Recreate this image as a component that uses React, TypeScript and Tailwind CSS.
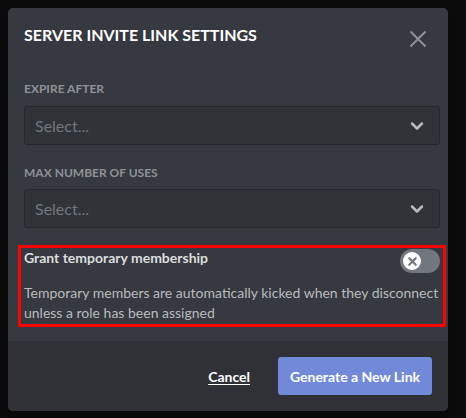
import { FiChevronDown, FiX } from 'react-icons/fi'

const font = { fontFamily: "Lato, 'Noto Sans', sans-serif" }

function SelectBox() {
    return (
        <div className="flex h-[39px] items-center justify-between rounded-[3px] border border-[#25272b] bg-[#303338] pl-[10px] pr-[12px]">
            <span className="text-[16px] text-[#72767d]">Select...</span>
            <FiChevronDown size={20} strokeWidth={3} className="text-[#b9bbbe]" />
        </div>
    )
}

export default function App() {
    return (
        <div className="relative h-[418px] w-[466px] overflow-hidden bg-[#0b0b0c]" style={font}>
            <div className="absolute left-[8px] top-[8px] w-[440px] overflow-hidden rounded-[5px] bg-[#36393f] shadow-lg">
                {/* ── Header ─────────────────────────────── */}
                <div className="flex items-start justify-between pl-[16px] pr-[21px] pt-[16px]">
                    <h2 className="text-[16px] font-bold leading-[22px] text-white">SERVER INVITE LINK SETTINGS</h2>
                    <svg width="18" height="18" viewBox="0 0 18 18" className="mt-[6px]">
                        <path d="M1.5 1.5L16.5 16.5M16.5 1.5L1.5 16.5" stroke="#8e9297" strokeWidth="2" />
                    </svg>
                </div>

                {/* ── Body ───────────────────────────────── */}
                <div className="pb-[14px] pl-[16px] pr-[8px] pt-[33px]">
                    <p className="mb-[9px] text-[12px] font-bold leading-[16px] text-[#8e9297]">EXPIRE AFTER</p>
                    <SelectBox />

                    <p className="mb-[8px] mt-[20px] text-[12px] font-bold leading-[16px] text-[#8e9297]">MAX NUMBER OF USES</p>
                    <SelectBox />

                    <div className="mx-[-6px] mt-[17px] border-[3px] border-[#ff0000] px-[3px] pb-[1px]">
                        <div className="flex items-start justify-between">
                            <span className="text-[14px] font-bold leading-[20px] text-[#dcddde]">Grant temporary membership</span>
                            <div className="mt-[1px] flex h-[24px] w-[40px] items-center rounded-full bg-[#72767d] px-[3px]">
                                <div className="flex h-[18px] w-[18px] items-center justify-center rounded-full bg-white">
                                    <FiX size={13} strokeWidth={4} className="text-[#72767d]" />
                                </div>
                            </div>
                        </div>
                        <p className="mt-[10px] text-[14px] leading-[20px] text-[#b9bbbe]">
                            Temporary members are automatically kicked when they disconnect unless a role has been assigned
                        </p>
                    </div>
                </div>

                {/* ── Footer ─────────────────────────────── */}
                <div className="flex h-[70px] items-center justify-end bg-[#2f3136] px-[16px]">
                    <span className="mr-[28px] text-[14px] font-bold text-white underline underline-offset-2">Cancel</span>
                    <div className="flex h-[38px] w-[154px] items-center justify-center rounded-[3px] bg-[#7289da] text-[14px] font-bold text-white">
                        Generate a New Link
                    </div>
                </div>
            </div>
        </div>
    )
}
